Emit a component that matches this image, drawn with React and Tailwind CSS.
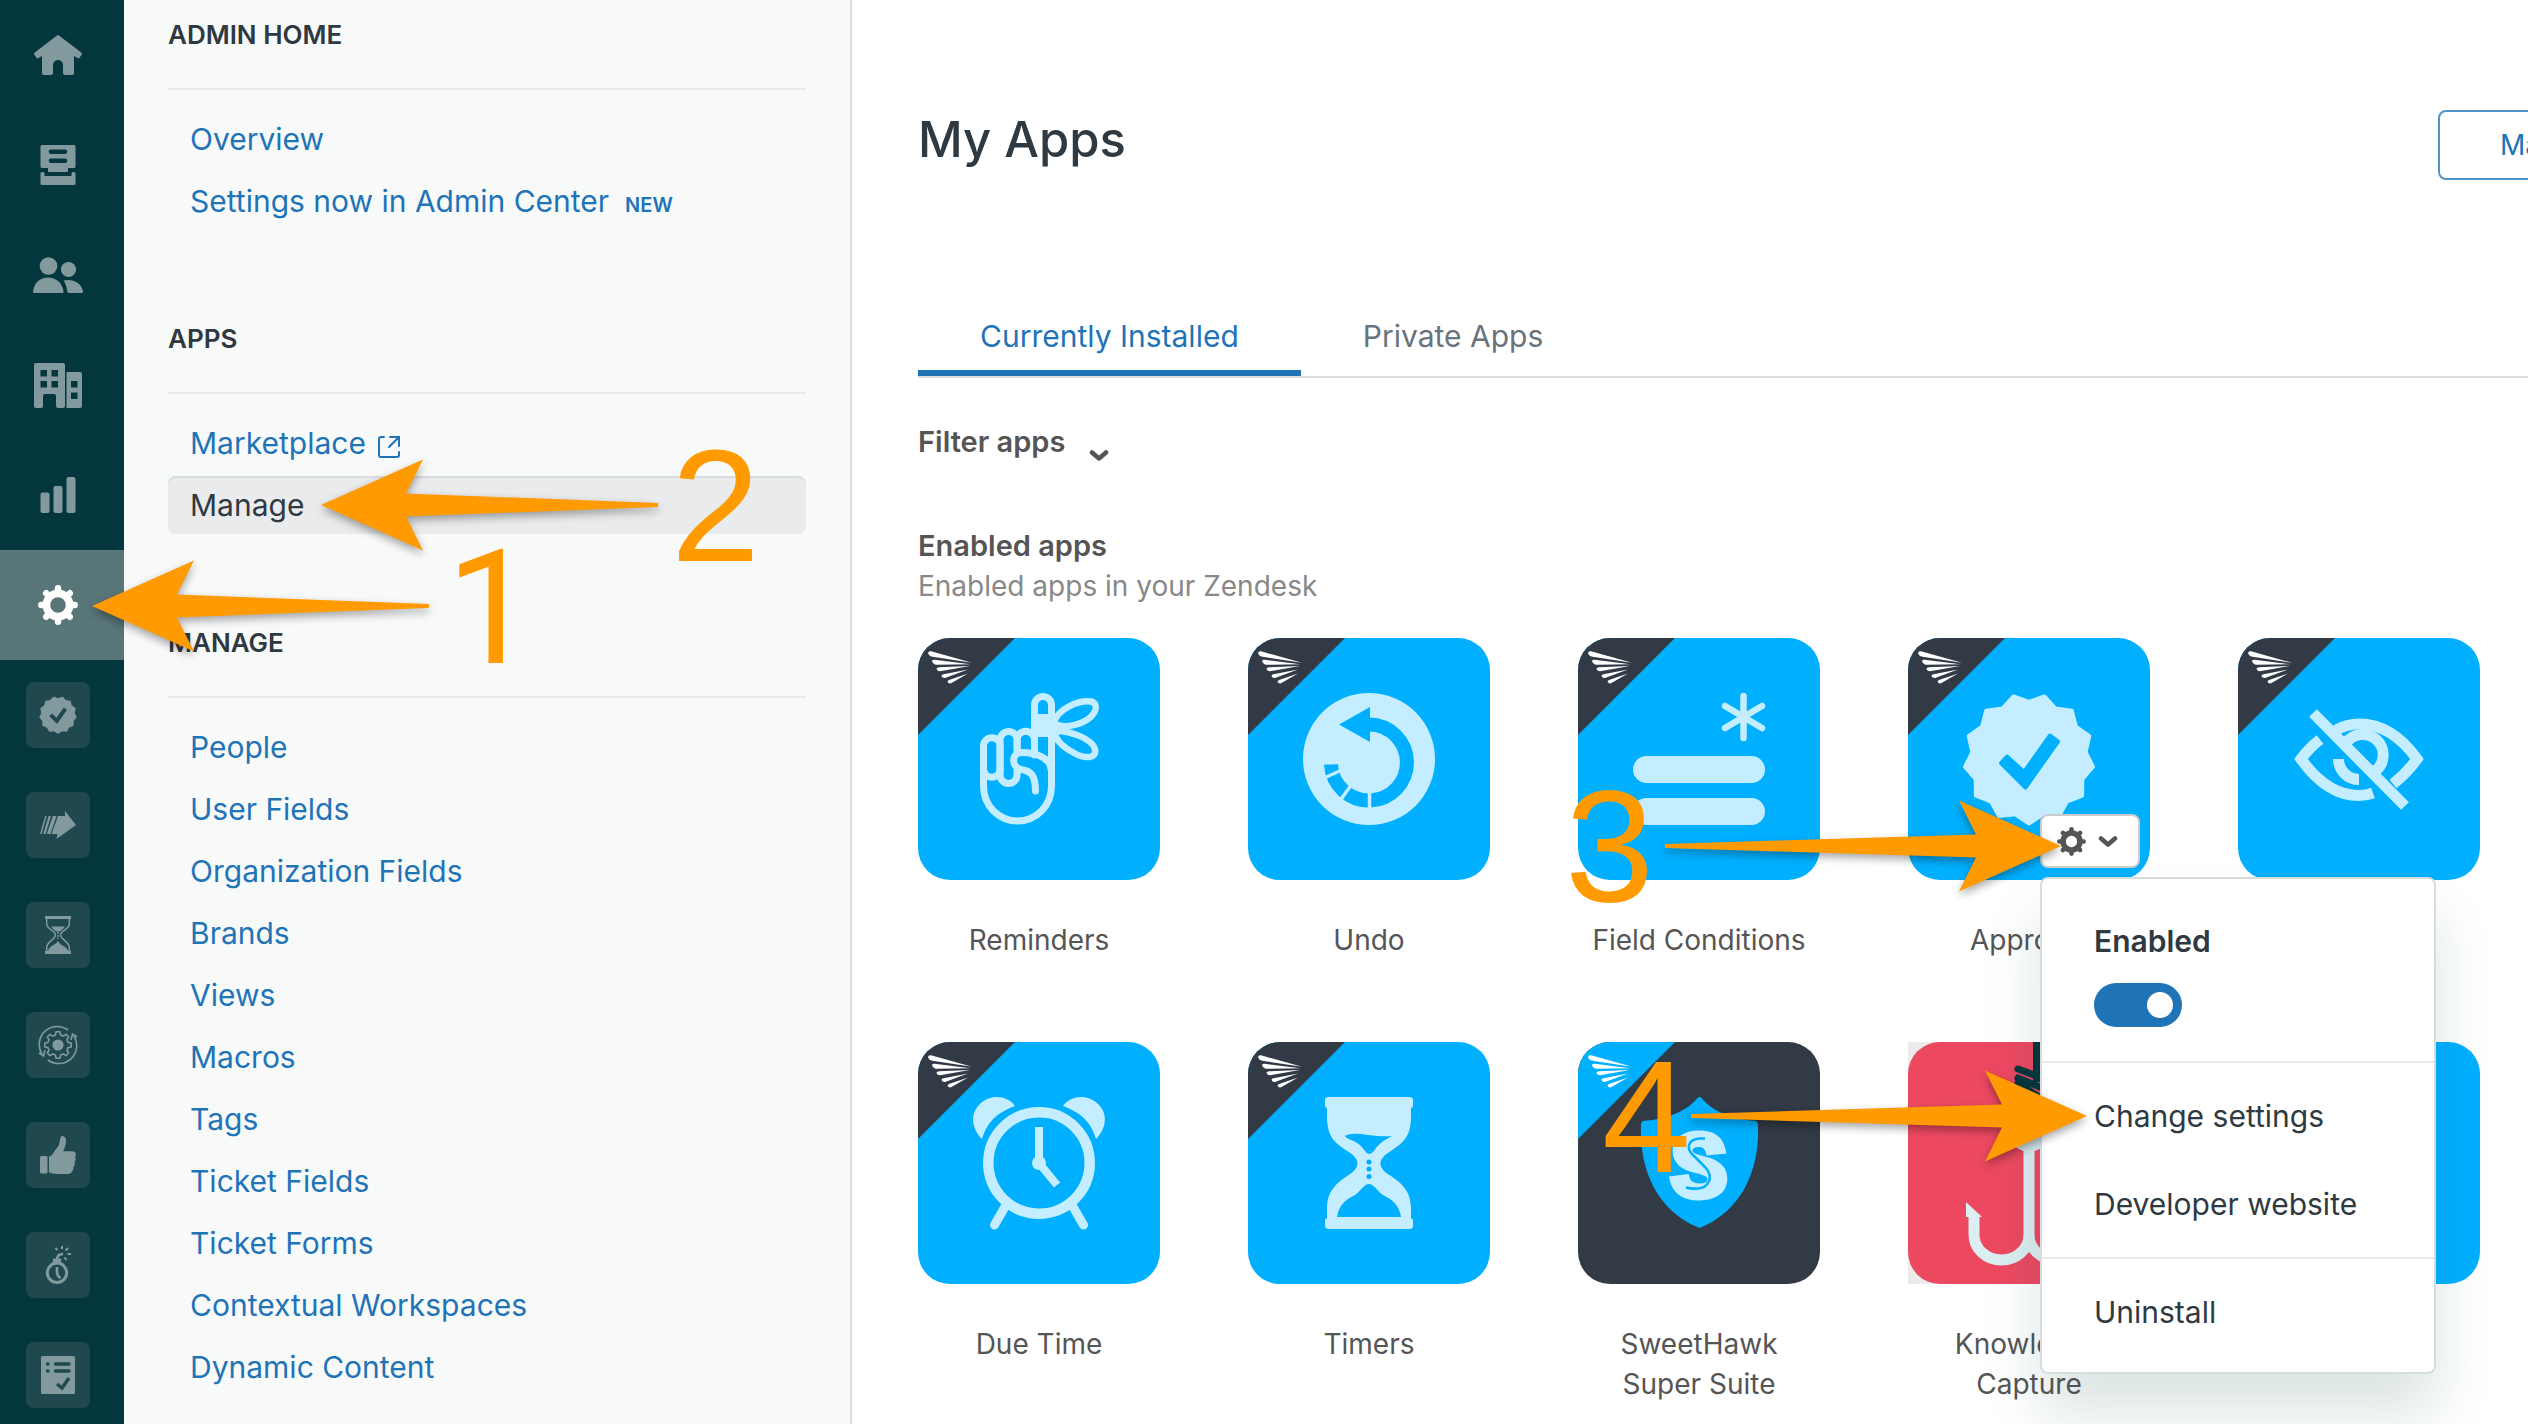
import React, { useState } from 'react';
import clsx from 'clsx';

const LIGHT = "#c4edff";
const BLUE = "#00b0ff";
const SLATE = "#323a46";

/* ---------- Rail icons ---------- */

const HomeIcon = () => (
  <svg width="48" height="40" viewBox="0 0 48 40" fill="currentColor">
    <path d="M23 .4q1-.8 2 0L47.200 17.500q1.200 1 .4 2.200l-2.100 3.100q-.8 1.100-2 .3L40 21v17q0 2-2 2h-7q-2 0-2-2v-8a5 5 0 0 0-10 0v8q0 2-2 2h-7q-2 0-2-2V21l-3.500 2.100q-1.200.8-2-.3L.4 19.700q-.8-1.200.4-2.200z" />
  </svg>
);

const ViewsIcon = () => (
  <svg width="36" height="40" viewBox="0 0 36 40" fill="currentColor">
    <path fillRule="evenodd" d="M2 0h32q1.500 0 1.500 1.500v20q0 1.500-1.500 1.500h-6v3q0 1-1 1H9q-1 0-1-1v-3H2Q.5 23 .5 21.500v-20Q.5 0 2 0zM11 4.500a2.300 2.300 0 0 0 0 4.600h14a2.300 2.300 0 0 0 0-4.600zM11 13.500a2.300 2.300 0 0 0 0 4.600h14a2.300 2.300 0 0 0 0-4.600z" />
    <path d="M2 27h1q1.500 0 1.500 1.500V31h27v-2.500Q31.500 27 33 27h1q1.500 0 1.500 1.500v10q0 1.500-1.500 1.500H2Q.5 40 .5 38.500v-10Q.5 27 2 27z" />
  </svg>
);

const PeopleIcon = () => (
  <svg width="50" height="36" viewBox="0 0 50 36" fill="currentColor">
    <circle cx="15.500" cy="9" r="8.800" />
    <path d="M0 34.500C1 26 7 20.500 15 20.500S29.500 26 30.500 34.500q0 1.500-1.500 1.500H1.500Q0 36 0 34.500z" />
    <circle cx="35.500" cy="12.500" r="7.600" />
    <path d="M30.500 23.500c9-2 18 2 19.500 11q0 1.500-1.500 1.500H35.800q-1.300 0-1.600-1.800-.8-6.700-3.700-10.700z" />
  </svg>
);

const OrgIcon = () => (
  <svg width="48" height="45" viewBox="0 0 48 45" fill="currentColor">
    <path fillRule="evenodd" d="M2 0h27q2 0 2 2v41q0 2-2 2h-5q-2 0-2-2V33q0-2-2-2h-9q-2 0-2 2v10q0 2-2 2H2q-2 0-2-2V2q0-2 2-2zM6.500 7v6.500H13V7zM17.500 7v6.500H24V7zM6.500 18v6.500H13V18zM17.500 18v6.500H24V18z" />
    <path fillRule="evenodd" d="M32.500 9H46q2 0 2 2v32q0 2-2 2H32.500zM37 18v6.500h6.500V18zM37 29.500V36h6.500v-6.500z" />
  </svg>
);

const ChartIcon = () => (
  <svg width="36" height="36" viewBox="0 0 36 36" fill="currentColor">
    <rect x="0.500" y="15.500" width="9" height="20.500" rx="2" />
    <rect x="13.500" y="9" width="9" height="27" rx="2" />
    <rect x="26.500" y="0" width="9" height="36" rx="2" />
  </svg>
);

function GearIcon({ size }) {
  return (
    <svg width={size} height={size} viewBox="-20 -20 40 40" fill="none" stroke="currentColor">
      <circle r="11.600" strokeWidth="7.600" />
      {[0, 45, 90, 135, 180, 225, 270, 315].map((a) => (
        <path key={a} d="M0 -13V-16.700" strokeWidth="6.400" strokeLinecap="round" transform={`rotate(${a})`} />
      ))}
    </svg>
  );
}

// Thirteen pointed seal, one point straight down
const sealPoints = Array.from({ length: 26 }, (_, i) => {
  const a = Math.PI / 2 + (i * Math.PI) / 13;
  const r = i % 2 ? 57 : 64.5;
  return `${(121 + r * Math.cos(a)).toFixed(1)},${(121 + r * Math.sin(a)).toFixed(1)}`;
}).join(" ");

function Seal({ color, check }) {
  return (
    <g strokeLinejoin="round" strokeWidth="4">
      <polygon points={sealPoints} fill={color} stroke={color} />
      <path d="M93 125l6-6.500 17 15.500 26-36.500 8 6-32.500 46z" fill={check} stroke={check} />
    </g>
  );
}

const SealIcon = () => (
  <svg width="38" height="38" viewBox="54 54 134 134">
    <Seal color="currentColor" check="#1f494f" />
  </svg>
);

const FastArrowIcon = () => (
  <svg width="36" height="28" viewBox="0 0 36 28" fill="currentColor">
    <path d="M18 5h7V0l11 14-19.500 14 1-5h-6z" />
    <path d="M12.800 5h3.700L10.400 23H6.800zM8.600 5h2.400L5.500 23H3.200zM5.200 5h1.500L1.600 23H0z" />
  </svg>
);

const GlassIcon = () => (
  <svg width="26" height="38" viewBox="0 0 26 38" fill="none" stroke="currentColor">
    <path d="M0 1.500h26M0 36.500h26" strokeWidth="3" />
    <path d="M1.700 3v5C1.700 13 10.500 15 10.500 19S1.700 26 1.700 31v4M24.300 3v5C24.300 13 15.500 15 15.500 19s8.800 7 8.800 12v4" strokeWidth="1.500" />
    <path d="M6 10.500h14q-2 3-5 5h-4q-3-2-5-5zM3 36q0-4 4.500-6.500T13 25q1 2.500 5.500 5T23 36z" fill="currentColor" stroke="none" />
    <path d="M13 16v7" strokeWidth="1.500" strokeDasharray="2 1" />
  </svg>
);

const CycleIcon = () => (
  <svg width="40" height="40" viewBox="-20 -20 40 40" fill="none" stroke="currentColor" strokeWidth="1.600">
    <path d="M10-15A18 18 0 0 0-16 9M-10 15A18 18 0 0 0 16-9" />
    <path d="M-19 8l4.500 3 1.500-6M19-8l-4.500-3-1.500 6" />
    <circle r="5.600" fill="currentColor" stroke="none" />
    <path d="M-2-13.200h4l.6 3.200 2.700 1.100 2.700-1.800 2.700 2.700-1.800 2.700 1.100 2.700 3.200.6v4l-3.200.6-1.100 2.700 1.800 2.700-2.700 2.700-2.700-1.800-2.700 1.100-.6 3.200h-4l-.6-3.200-2.700-1.100-2.700 1.800-2.700-2.700 1.800-2.700-1.100-2.700-3.200-.6v-4l3.200-.6 1.100-2.700-1.800-2.700 2.700-2.700 2.700 1.800 2.700-1.100z" strokeLinejoin="round" />
  </svg>
);

const ThumbIcon = () => (
  <svg width="36" height="38" viewBox="0 0 36 38" fill="currentColor">
    <rect x="0" y="20" width="7.500" height="17.500" rx="1.500" />
    <path d="M9 20.500q2.500 0 4.500-4 1-2 3.500-4.500 2.500-3 2.700-6.500Q20 0 22.500 0 26 .5 26 5q0 4-2.800 10.300H32q4 .2 4 3.200 0 1.500-1 2.200 1.500 3.500-.5 5 1 3.500-1 5 .3 3.500-1.500 4.500-.8 2.800-5 2.800H17q-4.500-.4-8-1.500z" />
  </svg>
);

const BombIcon = () => (
  <svg width="26" height="38" viewBox="0 0 26 38" fill="none" stroke="currentColor">
    <circle cx="12" cy="26.800" r="9.700" strokeWidth="3" />
    <path d="M8 14.500h8" strokeWidth="4" />
    <path d="M12 13q.5-5 6-5" strokeWidth="2.600" />
    <path d="M12 21v5q0 4 3.500 6" strokeWidth="2.600" />
    <path d="M17 0v3M10.500 2l1.800 2M23 2l-2.500 2.500M22.500 8H26M19.500 11.500l2 2.500" strokeWidth="2" />
  </svg>
);

const ChecklistIcon = () => (
  <svg width="34" height="38" viewBox="0 0 34 38">
    <rect width="34" height="38" rx="1.500" fill="currentColor" />
    <g stroke="#1f494f" strokeWidth="3.400" strokeLinecap="round" fill="none">
      <path d="M6.500 8h.5M14.500 8H28M6.500 15h.5M14.500 15H28" />
      <path d="M16 28l5 4 7-10" strokeLinecap="butt" />
    </g>
  </svg>
);

const railItems = [
  { label: "Home", Icon: HomeIcon },
  { label: "Views", Icon: ViewsIcon },
  { label: "Customers", Icon: PeopleIcon },
  { label: "Organizations", Icon: OrgIcon },
  { label: "Reporting", Icon: ChartIcon },
  { label: "Admin", Icon: () => <GearIcon size={40} />, active: true },
  { label: "Approvals", Icon: SealIcon, app: true },
  { label: "Quick actions", Icon: FastArrowIcon, app: true },
  { label: "Timers", Icon: GlassIcon, app: true },
  { label: "Automation", Icon: CycleIcon, app: true },
  { label: "Feedback", Icon: ThumbIcon, app: true },
  { label: "Due Time", Icon: BombIcon, app: true },
  { label: "Tasks", Icon: ChecklistIcon, app: true },
];

function Rail() {
  return (
    <nav aria-label="Products" className="flex w-[124px] shrink-0 flex-col bg-[#04363d] text-[#829a9d]">
      {railItems.map(({ label, Icon, active, app }) => (
        <a
          key={label}
          href="#"
          aria-label={label}
          className={clsx("flex h-[110px] shrink-0 items-center justify-center pr-2", active && "bg-[#587678] text-white")}
        >
          {app ? (
            <span className="flex h-[66px] w-16 items-center justify-center rounded-lg bg-[#1f494f]">
              <Icon />
            </span>
          ) : (
            <Icon />
          )}
        </a>
      ))}
    </nav>
  );
}

/* ---------- Admin sidebar ---------- */

const sections = [
  {
    title: "ADMIN HOME",
    items: [{ name: "Overview" }, { name: "Settings now in Admin Center", badge: "NEW" }],
  },
  {
    title: "APPS",
    items: [{ name: "Marketplace", external: true }, { name: "Manage", current: true }],
  },
  {
    title: "MANAGE",
    items: [
      { name: "People" },
      { name: "User Fields" },
      { name: "Organization Fields" },
      { name: "Brands" },
      { name: "Views" },
      { name: "Macros" },
      { name: "Tags" },
      { name: "Ticket Fields" },
      { name: "Ticket Forms" },
      { name: "Contextual Workspaces" },
      { name: "Dynamic Content" },
    ],
  },
];

const ExternalIcon = () => (
  <svg width="22" height="22" viewBox="0 0 22 22" fill="none" stroke="currentColor" strokeWidth="2" strokeLinecap="round" className="mt-2 ml-3">
    <path d="M6 1H3Q1 1 1 3v16q0 2 2 2h16q2 0 2-2v-3" />
    <path d="M12 1h9v9M20.500 1.500L11 11" />
  </svg>
);

function Sidebar() {
  return (
    <aside className="flex w-[728px] shrink-0 flex-col gap-[93px] border-r-2 border-[#d8dcde] bg-[#f8faf9] pt-[19px] pr-11 pl-11">
      {sections.map((section) => (
        <section key={section.title}>
          <h2 className="text-[26px] leading-8 font-semibold text-[#2f3941]">{section.title}</h2>
          <hr className="mt-[37px] mb-5 border-t-2 border-[#e9ebed]" />
          <ul className="flex flex-col gap-1">
            {section.items.map((item) => (
              <li key={item.name}>
                <a
                  href="#"
                  className={clsx(
                    "flex h-[58px] items-center rounded-lg px-[22px] text-3xl",
                    item.current ? "bg-[#e9ebed] text-[#2f3941] shadow-[inset_0_2px_0_#d8dcde]" : "text-[#1f73b7]"
                  )}
                >
                  {item.name}
                  {item.external && <ExternalIcon />}
                  {item.badge && <span className="mt-2 ml-4 text-xl font-semibold">{item.badge}</span>}
                </a>
              </li>
            ))}
          </ul>
        </section>
      ))}
    </aside>
  );
}

/* ---------- App tiles ---------- */

function Ribbon({ color = SLATE }) {
  return (
    <>
      <path d="M0 0H97L0 97z" fill={color} />
      <g fill="#fff">
        <path d="M10 15.500Q10 13 13 13.300L54 24.800 14.500 18.800Q11 18 10 15.500z" />
        <path d="M14 23q.5-1.500 2.500-1.300L52.500 26.300 17.500 26.700Q14.500 26 14 23z" />
        <path d="M18.500 30.500q.5-1 2.500-1.200L52 28 22 33.300q-3 0-3.500-2.800z" />
        <path d="M23.500 37.800q.3-1.200 2-1.600L50 31.500 27 40q-2.800.3-3.500-2.200z" />
        <path d="M29.500 43.500q.3-1 1.500-1.600L50 35.500 33 45.300q-2.500.7-3.500-1.800z" />
      </g>
    </>
  );
}

const RemindersArt = () => (
  <g fill="none" stroke={LIGHT} strokeWidth="7" strokeLinecap="round">
    <path d="M65.500 108V148C65.500 168 81 183 99.500 183S133.500 168 133.500 148V67a8.500 8.500 0 0 0-17 0V117" />
    <path d="M65.500 137V108a8.300 8.300 0 0 1 16.600 0V131a8.300 8.300 0 0 1-16.600 0" />
    <path d="M82.100 131V102a8.500 8.500 0 0 1 17 0V112M82.100 131v6a8.500 8.500 0 0 0 17 0v-6" />
    <path d="M99.100 112V102a8.500 8.500 0 0 1 17.400 0" />
    <path d="M133 131C132 120 118 114.500 104 114.500 93 114.500 93 129 103 131.500 113 133 117.500 137 117.500 153" />
    <path d="M120 76h10v23h-10z" fill={LIGHT} stroke="none" />
    <path d="M136 84C140 71 160 62 173 63.500 182 66 178 78 165 84 156 88 145 89 137 87" strokeWidth="6.500" />
    <path d="M136 93C152 92 174 101 177 111 179 121 167 121 156 115 145 109 138 103 136 93" strokeWidth="6.500" />
    <path d="M132 81l12 4 14 4-14 4-12 4z" fill={LIGHT} stroke="none" />
  </g>
);

const UndoArt = () => (
  <g>
    <circle cx="121" cy="121" r="66" fill={LIGHT} />
    <path d="M121 86.500A38 38 0 1 1 83 126.500" fill="none" stroke={BLUE} strokeWidth="14" />
    <path d="M122 69v35L91 86.500z" fill={BLUE} />
    <path d="M121.500 154v18M104 146l-13 18M94 132l-18 8" stroke={LIGHT} strokeWidth="3.500" />
  </g>
);

const FieldsArt = () => (
  <g>
    <rect x="55" y="118" width="132" height="27" rx="13.500" fill={LIGHT} />
    <rect x="55" y="160" width="132" height="27" rx="13.500" fill={LIGHT} />
    <path d="M165.500 58v42M147 68l37 22M184 68l-37 22" stroke={LIGHT} strokeWidth="6.500" strokeLinecap="round" />
  </g>
);

const EyeArt = () => (
  <g fill="none" stroke={LIGHT} strokeWidth="11">
    <path d="M82 101.500Q71 110 63 121 89 157.500 121 157.500 128 157.500 135 155" />
    <path d="M98 92Q109 86 121 86 154 86 179 121 169 135 155 146" />
    <path d="M100.500 121A20.500 20.500 0 0 0 121 141.500" />
    <path d="M108 105A20.500 20.500 0 1 1 138 132.500" />
    <path d="M75 75L167 168" />
  </g>
);

const Bell = () => <path d="M64 97C53 86 52 71 62 62 72 52 89 53 97 64 75 72 68 84 64 97z" fill={LIGHT} />;

const AlarmArt = () => (
  <g>
    <Bell />
    <g transform="translate(242) scale(-1 1)">
      <Bell />
    </g>
    <circle cx="121" cy="121" r="50.700" fill="none" stroke={LIGHT} strokeWidth="10.500" />
    <path d="M121 85v36M121 121l18 22" stroke={LIGHT} strokeWidth="8" />
    <circle cx="121" cy="121" r="7" fill={LIGHT} />
    <path d="M88 163L76.500 183M154 163l11.500 20" stroke={LIGHT} strokeWidth="9" strokeLinecap="round" />
  </g>
);

const HourglassArt = () => (
  <g>
    <path
      d="M81 55H161q4 0 4 3v5q0 3-2 3v11C162 97 154 101 143 109 129 117 129 126 143 134 154 142 162 148 163 165V176q2 1 2 3v5q0 3-4 3H81q-4 0-4-3v-5q0-2 2-3V165C80 148 88 142 99 134 113 126 113 117 99 109 88 101 80 97 79 77V66q-2 0-2-3V58q0-3 4-3z"
      fill={LIGHT}
    />
    <g fill={BLUE}>
      <path d="M97 94Q103 90 120 93 135 95 144 94 130 101 126 109 121 115 117 109 112 101 103 98 98 96 97 94z" />
      <circle cx="121" cy="120" r="2.500" />
      <circle cx="121" cy="127" r="2.500" />
      <circle cx="121" cy="134.500" r="2.500" />
      <path d="M89 175C91 163 97 158 107 153 113 149 116 142 121 142S129 149 135 153C145 158 151 163 153 175z" />
    </g>
  </g>
);

const ShieldArt = () => (
  <g>
    <path d="M119.500 56q2-2 4 0C133 68 152 77 178 79q2 1 2 4C182 130 162 170 121.500 186 81 170 61 130 63 83q0-3 2-4C91 77 110 68 119.500 56z" fill={BLUE} />
    <text x="121" y="154" textAnchor="middle" fontSize="92" fill={LIGHT} stroke={LIGHT} strokeWidth="7" className="font-['Liberation_Mono'] font-bold">S</text>
    {/* groove along the middle of the emblem */}
    <path d="M127 96.500H121C109 98 108 107 116 114L128 126C136 136 130 146 120 146.500Q113 147 108 145.500" fill="none" stroke={BLUE} strokeWidth="2.500" />
  </g>
);

const HookArt = () => (
  <g fill="none" strokeLinecap="round">
    <path d="M131 0V40" stroke="#04363d" strokeWidth="12" strokeLinecap="butt" />
    <path d="M110 27l34 13M110 36l34 14M110 41l30 20" stroke="#04363d" strokeWidth="7" />
    <circle cx="121" cy="88" r="16" stroke="#dbeef2" strokeWidth="11" />
    <g stroke="#dbeef2" strokeWidth="11" strokeLinecap="butt">
      <path d="M66 172V193A27.500 25 0 0 0 121 193V104" />
      <path d="M121 193A27.500 25 0 0 0 176 193V172" />
    </g>
    <path d="M58 160l16 15H58z" fill="#dbeef2" />
  </g>
);

const apps = [
  { name: "Reminders", Art: RemindersArt },
  { name: "Undo", Art: UndoArt },
  { name: "Field Conditions", Art: FieldsArt },
  { name: "Approval", Art: () => <Seal color={LIGHT} check={BLUE} />, menu: true },
  { name: "", Art: EyeArt },
  { name: "Due Time", Art: AlarmArt },
  { name: "Timers", Art: HourglassArt },
  { name: "SweetHawk Super Suite", Art: ShieldArt, fill: SLATE, ribbon: BLUE },
  { name: "Knowledge Capture", Art: HookArt, fill: "#ec4961", ribbon: null },
  { name: "", Art: () => null },
];

function AppTile({ app }) {
  const { name, Art, fill = BLUE, ribbon = SLATE, menu } = app;
  return (
    <li className="flex h-[404px] w-[242px] shrink-0 flex-col gap-10">
      <div className="relative">
        <a href="#" aria-label={name || "App"} className={clsx("block", ribbon === null && "bg-[#ebebeb]")}>
          <svg viewBox="0 0 242 242" className="block w-full overflow-hidden rounded-[32px]">
            <rect width="242" height="242" fill={fill} />
            {ribbon && <Ribbon color={ribbon} />}
            <Art />
          </svg>
        </a>
        {menu && <SettingsMenu />}
      </div>
      <p className="text-center text-[28px] leading-10 text-[#555]">{name}</p>
    </li>
  );
}

const Chevron = ({ className }) => (
  <svg width="20" height="13" viewBox="0 0 20 13" fill="none" stroke="currentColor" strokeWidth="4.500" strokeLinecap="round" strokeLinejoin="round" className={className}>
    <path d="M3 3.500l7 6 7-6" />
  </svg>
);

function SettingsMenu() {
  const [enabled, setEnabled] = useState(true);
  const itemClass = "flex h-[88px] w-full items-center px-[52px] text-left";
  return (
    <>
      <button
        type="button"
        aria-label="App options"
        aria-haspopup="menu"
        className="absolute right-[10px] bottom-3 z-10 flex h-[54px] w-[100px] items-center gap-3 rounded-lg border-2 border-[#ccc] bg-white pl-[15px] text-[#555]"
      >
        <GearIcon size={29} />
        <Chevron />
      </button>
      <div className="absolute top-[239px] left-[132px] z-20 w-[396px] rounded-lg border-2 border-[#d8dcde] bg-white text-3xl text-[#2f3941] shadow-[0_40px_56px_rgba(23,73,77,0.15)]">
        <div className="flex h-[184px] flex-col gap-5 border-b-2 border-[#e9ebed] px-[52px] pt-10">
          <label htmlFor="app-enabled" className="leading-[44px] font-semibold">Enabled</label>
          <input
            id="app-enabled"
            type="checkbox"
            role="switch"
            checked={enabled}
            onChange={() => setEnabled(!enabled)}
            className="h-11 w-[88px] appearance-none rounded-full bg-gray-400 p-[9px] before:block before:size-[26px] before:rounded-full before:bg-white checked:bg-[#1f73b7] checked:before:ml-auto"
          />
        </div>
        <div className="border-b-2 border-[#e9ebed] py-[9px]">
          <button type="button" className={itemClass}>Change settings</button>
          <button type="button" className={itemClass}>Developer website</button>
        </div>
        <div className="pt-[9px] pb-4">
          <button type="button" className={itemClass}>Uninstall</button>
        </div>
      </div>
    </>
  );
}

function Main() {
  return (
    <main className="min-w-0 flex-1 overflow-hidden bg-white pl-[66px]">
      {/* Content runs past the right edge of the window */}
      <div className="-mr-[200px] flex flex-col">
        <header className="flex items-start justify-between pt-[110px]">
          <h1 className="text-[49px] leading-[60px] font-medium text-[#2f3941]">My Apps</h1>
          <button type="button" className="h-[70px] w-[290px] rounded-lg border-2 border-[#5293c7] pl-[60px] text-left text-[28px] text-[#1f73b7]">
            Marketplace
          </button>
        </header>
        <div className="mt-[116px] flex border-b-2 border-[#d8dcde] text-3xl leading-9">
          <a href="#" className="h-20 border-b-[6px] border-[#1f73b7] px-[62px] pt-[22px] text-[#1f73b7]">Currently Installed</a>
          <a href="#" className="px-[62px] pt-[22px] text-[#68737d]">Private Apps</a>
        </div>
        <button type="button" className="mt-[43px] flex items-center gap-6 self-start text-[29px] leading-10 font-semibold text-[#555]">
          Filter apps
          <Chevron className="mt-7" />
        </button>
        <h2 className="mt-[64px] text-[29px] leading-10 font-semibold text-[#555]">Enabled apps</h2>
        <p className="text-[28px] leading-10 text-[#888]">Enabled apps in your Zendesk</p>
        <ul className="mt-8 grid w-[1562px] grid-cols-5 gap-x-[88px]">
          {apps.map((app, index) => (
            <AppTile key={index} app={app} />
          ))}
        </ul>
      </div>
    </main>
  );
}

/* ---------- Walkthrough arrows ---------- */

const steps = [
  { step: 1, x: 92, y: 606, length: 337, dir: 1, textX: 446, textY: 663 },
  { step: 2, x: 321, y: 505, length: 337, dir: 1, textX: 671, textY: 561 },
  { step: 3, x: 2061, y: 846, length: 396, dir: -1, textX: 1565, textY: 901 },
  { step: 4, x: 2087, y: 1116, length: 396, dir: -1, textX: 1602, textY: 1172 },
];

function Walkthrough() {
  return (
    <svg className="pointer-events-none absolute inset-0 z-30 h-full w-full" fill="#ff9a00">
      {steps.map(({ step, x, y, length, dir, textX, textY }) => (
        <g key={step}>
          <g className="drop-shadow-[0_4px_4px_rgba(0,0,0,0.35)]">
            <polygon
              transform={`translate(${x} ${y}) scale(${dir} 1)`}
              points={`0,0 102,-45.500 85,-11.500 ${length},-2 ${length},2 85,11.500 102,45.500`}
            />
          </g>
          <text x={textX} y={textY} fontSize="160" className={step === 1 ? "font-['Roboto']" : "font-['Liberation_Sans']"}>
            {step}
          </text>
        </g>
      ))}
    </svg>
  );
}

export default function App() {
  return (
    <div className="relative flex h-screen overflow-hidden font-['Inter',sans-serif]">
      <Rail />
      <Sidebar />
      <Main />
      <Walkthrough />
    </div>
  );
}
